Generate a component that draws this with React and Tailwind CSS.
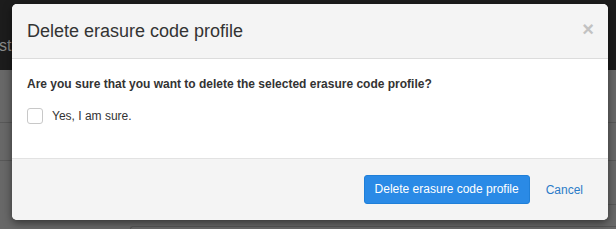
export default function App() {
  return (
    <div className="relative w-[616px] h-[229px] overflow-hidden bg-[#686868] font-['Liberation_Sans',Arial,sans-serif]">
      {/* page behind the backdrop */}
      <div className="h-[70px] bg-[#1c1c1c] flex items-start pt-[38px]">
        <span className="text-[16px] leading-[16px] text-[#8a8a8a] -ml-[1px]">st</span>
      </div>
      <div className="h-[53px] border-b border-[#585858]" />
      <div className="h-[38px] border-b border-[#585858]" />
      <div className="h-[44px] flex justify-end">
        <div className="w-[10px] border-b border-[#585858]" />
      </div>
      <div className="ml-[130px] mt-[21px] h-[3px] border-t border-l border-[#555] rounded-tl-[3px]" />

      {/* modal */}
      <div className="absolute left-[12px] top-[4px] w-[596px] h-[216px] rounded-[5px] overflow-hidden bg-white shadow-[0_3px_9px_rgba(0,0,0,0.5)] flex flex-col">
        <div className="h-[55px] bg-[#f4f4f4] border-b border-[#dcdcdc] flex items-center justify-between pl-[15px] pr-[14px] shrink-0">
          <h4 className="text-[18px] text-[#333] leading-none">Delete erasure code profile</h4>
          <span className="text-[#c2c2c2] text-[20px] font-bold leading-none mt-[-4px]">×</span>
        </div>
        <div className="h-[100px] border-b border-[#e2e2e2] px-[15px] pt-[18px] shrink-0">
          <p className="text-[12px] font-bold text-[#333] leading-[14px]">
            Are you sure that you want to delete the selected erasure code profile?
          </p>
          <label className="flex items-center mt-[16px] gap-[9px]">
            <span className="w-[16px] h-[16px] rounded-[3px] border border-[#c8c8c8] bg-white" />
            <span className="text-[12px] text-[#333]">Yes, I am sure.</span>
          </label>
        </div>
        <div className="flex-1 bg-[#f4f4f4] flex items-center justify-end pr-[25px] gap-[16px]">
          <button className="h-[29px] w-[166px] rounded-[3px] bg-[#2a8ae6] border border-[#1f7fd8] text-white text-[12px] mt-[-1px]">
            Delete erasure code profile
          </button>
          <span className="text-[12px] text-[#2b7bc8]">Cancel</span>
        </div>
      </div>
    </div>
  );
}
